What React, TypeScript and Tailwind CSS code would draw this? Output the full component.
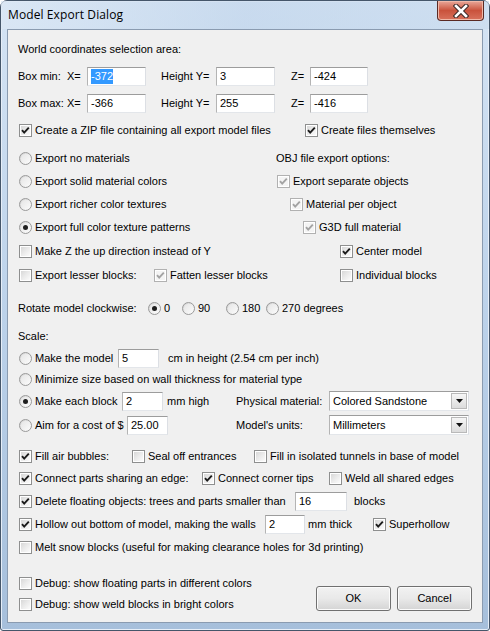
import React from "react";

const FONT = "font-['Liberation_Sans',Arial,sans-serif]";

function Check({ checked = false, disabled = false }: { checked?: boolean; disabled?: boolean }) {
  return (
    <span
      className={`relative block w-[13px] h-[13px] shrink-0 border p-[1px] bg-white ${
        disabled ? "border-[#b1b1b1]" : "border-[#8e8f8f]"
      }`}
    >
      <span
        className={`block w-full h-full ${
          disabled
            ? "bg-[#f4f4f4]"
            : "bg-gradient-to-br from-[#d8d8d8] via-[#ebebeb] to-[#fbfbfb]"
        }`}
      />
      {checked && (
        <svg className="absolute left-0 top-0" width="11" height="11" viewBox="0 0 11 11">
          <path
            d="M2 5.2 L4.2 7.6 L8.8 2.6"
            fill="none"
            stroke={disabled ? "#a3a3a3" : "#1b1b1b"}
            strokeWidth="1.9"
          />
        </svg>
      )}
    </span>
  );
}

function Radio({ checked = false }: { checked?: boolean }) {
  return (
    <span className="relative flex w-[13px] h-[13px] shrink-0 items-center justify-center rounded-full border border-[#9a9a9a] bg-gradient-to-br from-[#cfcfcf] via-[#ececec] to-white">
      <span className="block w-[9px] h-[9px] rounded-full bg-gradient-to-br from-[#e6e6e6] to-[#fafafa]" />
      {checked && (
        <span className="absolute left-[3px] top-[3px] block w-[5px] h-[5px] rounded-full bg-[#1e1e1e]" />
      )}
    </span>
  );
}

function CheckItem({
  checked,
  disabled,
  children,
}: {
  checked?: boolean;
  disabled?: boolean;
  children: React.ReactNode;
}) {
  return (
    <span className="flex items-center">
      <Check checked={checked} disabled={disabled} />
      <span className="ml-[3px] whitespace-nowrap">{children}</span>
    </span>
  );
}

function RadioItem({ checked, children }: { checked?: boolean; children: React.ReactNode }) {
  return (
    <span className="flex items-center">
      <Radio checked={checked} />
      <span className="ml-[3px] whitespace-nowrap">{children}</span>
    </span>
  );
}

function Input({ value, w, selected }: { value: string; w: string; selected?: boolean }) {
  return (
    <span
      className={`flex h-[19px] ${w} shrink-0 items-center border border-t-[#9c9c9c] border-l-[#b4b4b4] border-r-[#dcdfe4] border-b-[#e3e6ea] bg-white pl-[3px]`}
    >
      {selected ? (
        <span className="bg-[#3399ff] text-white leading-[15px]">{value}</span>
      ) : (
        <span>{value}</span>
      )}
    </span>
  );
}

function Select({ value }: { value: string }) {
  return (
    <span className="flex h-[20px] w-[140px] shrink-0 items-center border border-t-[#9c9c9c] border-l-[#b4b4b4] border-r-[#dcdfe4] border-b-[#e3e6ea] bg-white pl-[3px]">
      <span className="flex-1">{value}</span>
      <span className="mr-[1px] flex h-[16px] w-[16px] items-center justify-center border border-[#b9b9b9] bg-gradient-to-b from-[#f6f6f6] to-[#dcdcdc]">
        <svg width="7" height="4" viewBox="0 0 7 4">
          <path d="M0 0 H7 L3.5 4 Z" fill="#111" />
        </svg>
      </span>
    </span>
  );
}

function Button({ children }: { children: React.ReactNode }) {
  return (
    <span className="flex h-[25px] w-[75px] items-center justify-center rounded-[3px] border border-[#707070] bg-gradient-to-b from-[#f2f2f2] via-[#e9e9e9] to-[#d4d4d4] shadow-[inset_0_0_0_1px_#fbfbfb]">
      {children}
    </span>
  );
}

export default function App() {
  return (
    <div className={`${FONT} w-[490px] h-[631px] bg-white text-[11px] text-black`}>
      <div className="relative flex h-[631px] w-[490px] flex-col rounded-t-[7px] rounded-b-[3px] border border-[#45566a] bg-gradient-to-b from-[#d5e4f4] via-[#bcd2ea] to-[#a6bfdb] shadow-[inset_0_0_0_1px_#e6eef8]">
        {/* title bar */}
        <div className="flex h-[28px] shrink-0 items-center bg-gradient-to-r from-[#dce8f5]/70 via-[#b7cde6]/40 to-[#c9dbee]/60 pl-[7px]">
          <span className="text-[12px] text-black font-['Open_Sans',sans-serif] tracking-[0.1px]">Model Export Dialog</span>
          <span className="ml-auto mr-[5px] mb-[8px] flex h-[20px] w-[47px] items-center justify-center rounded-b-[4px] border border-t-0 border-[#5a2a24] bg-gradient-to-b from-[#e8a799] via-[#c9523c] to-[#d8715c] shadow-[inset_0_0_0_1px_#f0b8a8]">
            <svg width="16" height="14" viewBox="0 0 16 14">
              <path d="M3 2 L13 12 M13 2 L3 12" stroke="#3d2a28" strokeWidth="4.6" strokeLinecap="square" />
              <path d="M3 2 L13 12 M13 2 L3 12" stroke="#ffffff" strokeWidth="2.6" strokeLinecap="square" />
            </svg>
          </span>
        </div>
        {/* client area */}
        <div className="mx-[6px] mb-[7px] flex-1 border border-[#8a9bb0] bg-[#f0f0f0] pl-[10px] pt-[9px]">
          <div className="flex flex-col">
            <div className="flex h-[20px] items-center">World coordinates selection area:</div>

            <div className="mt-[7px] flex h-[20px] items-center">
              <span className="w-[69px] whitespace-pre">Box min:  X=</span>
              <Input value="-372" w="w-[59px]" selected />
              <span className="ml-[15px] w-[55px]">Height Y=</span>
              <Input value="3" w="w-[59px]" />
              <span className="ml-[16px] w-[19px]">Z=</span>
              <Input value="-424" w="w-[58px]" />
            </div>

            <div className="mt-[7px] flex h-[20px] items-center">
              <span className="w-[69px]">Box max: X=</span>
              <Input value="-366" w="w-[59px]" />
              <span className="ml-[15px] w-[55px]">Height Y=</span>
              <Input value="255" w="w-[59px]" />
              <span className="ml-[16px] w-[19px]">Z=</span>
              <Input value="-416" w="w-[58px]" />
            </div>

            <div className="mt-[7px] flex h-[20px] items-center pl-[1px]">
              <span className="w-[286px]">
                <CheckItem checked>Create a ZIP file containing all export model files</CheckItem>
              </span>
              <CheckItem checked>Create files themselves</CheckItem>
            </div>

            <div className="mt-[8px] flex h-[20px] items-center pl-[1px]">
              <span className="w-[257px]">
                <RadioItem>Export no materials</RadioItem>
              </span>
              <span>OBJ file export options:</span>
            </div>
            <div className="mt-[3px] flex h-[20px] items-center pl-[1px]">
              <span className="w-[258px]">
                <RadioItem>Export solid material colors</RadioItem>
              </span>
              <CheckItem checked disabled>Export separate objects</CheckItem>
            </div>
            <div className="mt-[3px] flex h-[20px] items-center pl-[1px]">
              <span className="w-[271px]">
                <RadioItem>Export richer color textures</RadioItem>
              </span>
              <CheckItem checked disabled>Material per object</CheckItem>
            </div>
            <div className="mt-[3px] flex h-[20px] items-center pl-[1px]">
              <span className="w-[284px]">
                <RadioItem checked>Export full color texture patterns</RadioItem>
              </span>
              <CheckItem checked disabled>G3D full material</CheckItem>
            </div>

            <div className="mt-[4px] flex h-[20px] items-center pl-[1px]">
              <span className="w-[321px]">
                <CheckItem>Make Z the up direction instead of Y</CheckItem>
              </span>
              <CheckItem checked>Center model</CheckItem>
            </div>
            <div className="mt-[4px] flex h-[20px] items-center pl-[1px]">
              <span className="w-[135px]">
                <CheckItem>Export lesser blocks:</CheckItem>
              </span>
              <span className="w-[186px]">
                <CheckItem checked disabled>Fatten lesser blocks</CheckItem>
              </span>
              <CheckItem>Individual blocks</CheckItem>
            </div>

            <div className="mt-[13px] flex h-[20px] items-center">
              <span className="w-[130px]">Rotate model clockwise:</span>
              <span className="w-[34px]">
                <RadioItem checked>0</RadioItem>
              </span>
              <span className="w-[44px]">
                <RadioItem>90</RadioItem>
              </span>
              <span className="w-[40px]">
                <RadioItem>180</RadioItem>
              </span>
              <RadioItem>270 degrees</RadioItem>
            </div>

            <div className="mt-[8px] flex h-[20px] items-center">Scale:</div>

            <div className="mt-[2px] flex h-[20px] items-center pl-[1px]">
              <span className="w-[99px]">
                <RadioItem>Make the model</RadioItem>
              </span>
              <Input value="5" w="w-[41px]" />
              <span className="ml-[9px]">cm in height (2.54 cm per inch)</span>
            </div>
            <div className="mt-[1px] flex h-[20px] items-center pl-[1px]">
              <RadioItem>Minimize size based on wall thickness for material type</RadioItem>
            </div>
            <div className="mt-[2px] flex h-[20px] items-center pl-[1px]">
              <span className="w-[103px]">
                <RadioItem checked>Make each block</RadioItem>
              </span>
              <Input value="2" w="w-[41px]" />
              <span className="ml-[4px] w-[69px]">mm high</span>
              <span className="w-[93px] whitespace-nowrap">Physical material:</span>
              <Select value="Colored Sandstone" />
            </div>
            <div className="mt-[4px] flex h-[20px] items-center pl-[1px]">
              <span className="w-[108px]">
                <RadioItem>Aim for a cost of $</RadioItem>
              </span>
              <Input value="25.00" w="w-[41px]" />
              <span className="ml-[68px] w-[93px] whitespace-nowrap">Model's units:</span>
              <Select value="Millimeters" />
            </div>

            <div className="mt-[11px] flex h-[20px] items-center pl-[1px]">
              <span className="w-[113px]">
                <CheckItem checked>Fill air bubbles:</CheckItem>
              </span>
              <span className="w-[122px]">
                <CheckItem>Seal off entrances</CheckItem>
              </span>
              <CheckItem>Fill in isolated tunnels in base of model</CheckItem>
            </div>
            <div className="mt-[2px] flex h-[20px] items-center pl-[1px]">
              <span className="w-[183px]">
                <CheckItem checked>Connect parts sharing an edge:</CheckItem>
              </span>
              <span className="w-[127px]">
                <CheckItem checked>Connect corner tips</CheckItem>
              </span>
              <CheckItem>Weld all shared edges</CheckItem>
            </div>
            <div className="mt-[3px] flex h-[20px] items-center pl-[1px]">
              <span className="w-[276px]">
                <CheckItem checked>Delete floating objects: trees and parts smaller than</CheckItem>
              </span>
              <Input value="16" w="w-[52px]" />
              <span className="ml-[7px]">blocks</span>
            </div>
            <div className="mt-[3px] flex h-[20px] items-center pl-[1px]">
              <span className="w-[246px]">
                <CheckItem checked>Hollow out bottom of model, making the walls</CheckItem>
              </span>
              <Input value="2" w="w-[40px]" />
              <span className="ml-[3px] w-[65px]">mm thick</span>
              <CheckItem checked>Superhollow</CheckItem>
            </div>
            <div className="mt-[3px] flex h-[20px] items-center pl-[1px]">
              <CheckItem>Melt snow blocks (useful for making clearance holes for 3d printing)</CheckItem>
            </div>

            <div className="flex">
              <div className="flex flex-col">
                <div className="mt-[16px] flex h-[20px] items-center pl-[1px]">
                  <CheckItem>Debug: show floating parts in different colors</CheckItem>
                </div>
                <div className="mt-[1px] flex h-[20px] items-center pl-[1px]">
                  <CheckItem>Debug: show weld blocks in bright colors</CheckItem>
                </div>
              </div>
              <div className="ml-auto mr-[10px] mt-[29px] flex gap-[6px]">
                <Button>OK</Button>
                <Button>Cancel</Button>
              </div>
            </div>
          </div>
        </div>
      </div>
    </div>
  );
}
